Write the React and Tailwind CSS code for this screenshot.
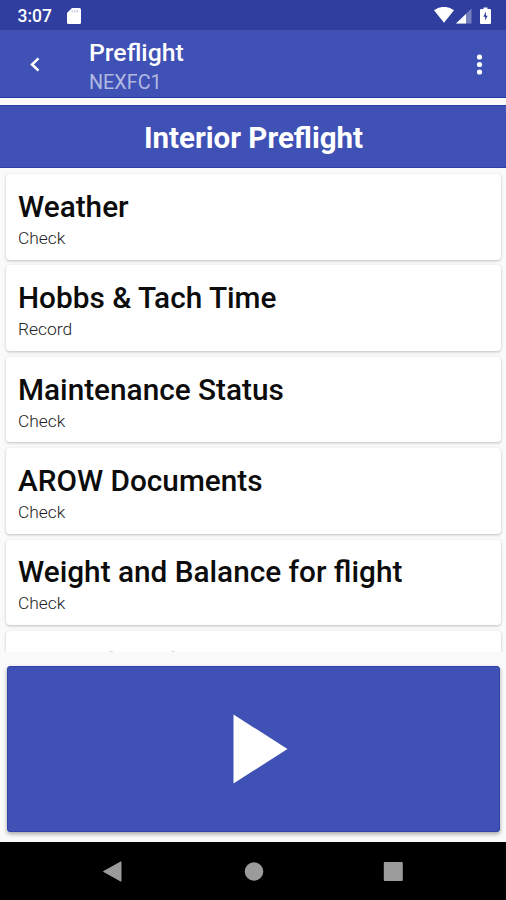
import React from "react";

const items = [
  { title: "Weather", action: "Check" },
  { title: "Hobbs & Tach Time", action: "Record" },
  { title: "Maintenance Status", action: "Check" },
  { title: "AROW Documents", action: "Check" },
  { title: "Weight and Balance for flight", action: "Check" },
];

const StatusBar = () => {
  return (
    <div className="flex h-[30px] shrink-0 items-center bg-[#303f9f] pl-[17.5px] text-white">
      <span className="mt-[3px] w-[49.5px] text-[17.5px] leading-none font-medium">3:07</span>
      <svg className="mt-px h-4 w-[14px]" viewBox="0 0 14 16">
        <path d="M5 0H12.5Q14 0 14 1.5V14.5Q14 16 12.5 16H1.5Q0 16 0 14.5V5Z" fill="#fff" />
        <path d="M5.2 2V4.5M7.8 2V4.5M10.4 2V4.5" stroke="#c3c8e6" strokeWidth="1.2" />
      </svg>
      <div className="ml-auto flex items-center pr-[15.5px]">
        <svg className="h-4 w-5" viewBox="0 0 20 16">
          <path d="M0 3.3Q10 -3.6 20 3.3L10 15.8Z" fill="#fff" />
        </svg>
        <svg className="mt-px ml-[2px] h-4 w-4" viewBox="0 0 16 16">
          <path d="M15.5 0.5V15.5H0Z" fill="#7781c0" />
          <path d="M10 6V15.5H0Z" fill="#fff" />
        </svg>
        <svg className="mt-px ml-2 h-[18px] w-[11px]" viewBox="0 0 11 18">
          <path d="M3.5 0.5H7.5V2H10Q11 2 11 3V16Q11 17 10 17H1Q0 17 0 16V3Q0 2 1 2H3.5Z" fill="#fff" />
          <path d="M6 4.8L3.3 9.7H5.1V13.6L7.7 8.7H6Z" fill="#303f9f" />
        </svg>
      </div>
    </div>
  );
};

const AppBar = () => {
  return (
    <div className="flex h-[68px] shrink-0 border-b border-[#2438a2] bg-[#3f51b5] text-white">
      <svg className="mt-[27px] ml-[30px] h-[15px] w-[10px]" viewBox="0 0 10 15">
        <path d="M8.5 1.3L2 7.5L8.5 13.7" fill="none" stroke="#fff" strokeWidth="2.5" />
      </svg>
      <div className="ml-[49px] pt-[7px]">
        <h1 className="text-[24.8px] leading-[31px] font-medium">Preflight</h1>
        <p className="mt-px text-[19.8px] leading-[27px] text-[#b2b9e1]">NEXFC1</p>
      </div>
      <svg className="mt-[23px] mr-[23px] ml-auto h-[22px] w-[7px]" viewBox="0 0 7 22" fill="#fff">
        <circle cx="3.5" cy="4" r="2.6" />
        <circle cx="3.5" cy="11.5" r="2.6" />
        <circle cx="3.5" cy="19" r="2.6" />
      </svg>
    </div>
  );
};

const ChecklistCard = ({ title, action }) => {
  return (
    <div className="h-[85.5px] shrink-0 rounded-[4px] bg-white pt-[14.9px] pl-3 shadow-[0_1px_3px_rgba(0,0,0,0.24)]">
      <h3 className="text-[29.75px] leading-[36px] font-medium whitespace-nowrap text-[#0c0c0c]">{title}</h3>
      <p className="text-[17.4px] leading-[26px] font-light text-[#222]">{action}</p>
    </div>
  );
};

const NavBar = () => {
  return (
    <div className="flex h-[58px] shrink-0 items-center bg-black pl-[103px]">
      <svg className="h-[21px] w-[300px]" viewBox="0 0 300 21" fill="#9b9b9b">
        <path d="M18 0.8V20.2L0.5 10.5Z" stroke="#9b9b9b" strokeLinejoin="round" />
        <circle cx="151" cy="10.5" r="9.3" />
        <rect x="280.8" y="1" width="19" height="19" rx="1" />
      </svg>
    </div>
  );
};

const App = () => {
  return (
    <div className="flex h-[900px] w-[506px] flex-col overflow-hidden bg-[#fafafa] font-['Roboto',sans-serif]">
      <StatusBar />
      <AppBar />
      <div className="mt-[6.5px] flex h-[63.5px] shrink-0 items-center justify-center border-y border-[#2c3fa6] bg-[#3f51b5] pt-[3px]">
        <h2 className="ml-px text-[29.5px] leading-[36px] font-bold text-white">Interior Preflight</h2>
      </div>
      <div className="flex h-[484px] shrink-0 flex-col gap-[5.9px] overflow-hidden pt-[6px] pr-[5px] pl-[6px]">
        {items.map((item) => (
          <ChecklistCard key={item.title} title={item.title} action={item.action} />
        ))}
        {/* next card, cut off by the end of the list */}
        <div className="flex h-[85.5px] shrink-0 rounded-[4px] bg-white pt-[20px] shadow-[0_1px_3px_rgba(0,0,0,0.24)]">
          <span className="ml-[103px] h-px w-1 bg-[#ddd]" />
          <span className="ml-[58px] h-px w-1 bg-[#ddd]" />
        </div>
      </div>
      <div className="pt-[14px] pr-[6px] pb-[10px] pl-[7px]">
        <button className="flex h-[166px] w-full items-center justify-center rounded-[3px] border border-[#3043a8] bg-[#3f51b5] shadow-[0_2px_4px_rgba(0,0,0,0.35)]">
          <svg className="ml-[14px] h-[70px] w-[55px]" viewBox="0 0 55 70">
            <path d="M0.5 0.5V69.5L54.5 35Z" fill="#fff" />
          </svg>
        </button>
      </div>
      <NavBar />
    </div>
  );
};

export default App;
